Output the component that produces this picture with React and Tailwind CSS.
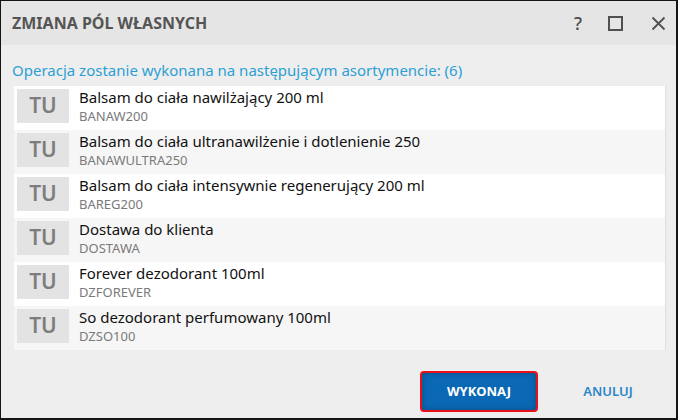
import React from 'react';

const items = [
    { name: 'Balsam do ciała nawilżający 200 ml', code: 'BANAW200' },
    { name: 'Balsam do ciała ultranawilżenie i dotlenienie 250', code: 'BANAWULTRA250' },
    { name: 'Balsam do ciała intensywnie regenerujący 200 ml', code: 'BAREG200' },
    { name: 'Dostawa do klienta', code: 'DOSTAWA' },
    { name: 'Forever dezodorant 100ml', code: 'DZFOREVER' },
    { name: 'So dezodorant perfumowany 100ml', code: 'DZSO100' },
];

const App = () => {
    return (
        <div className="w-[678px] h-[420px] bg-[#eeeeee] border-l border-t border-r-2 border-b-2 border-[#141414] flex flex-col font-['Noto_Sans',sans-serif] overflow-hidden">
            {/* Title bar */}
            <div className="h-[44px] shrink-0 bg-[#e5e5e5] flex items-center pl-[11px] pr-[10px]">
                <h1 className="text-[16px] font-bold text-[#555555]">ZMIANA PÓL WŁASNYCH</h1>
                <div className="ml-auto flex items-center">
                    <span className="w-[14px] text-center text-[18px] font-medium leading-none text-[#4a4a4a]">?</span>
                    <div className="ml-[23px] w-[15px] h-[15px] border-2 border-[#505050]" />
                    <svg className="ml-[28px]" width="15" height="15" viewBox="0 0 15 15">
                        <path d="M1.5 1.5 L13.5 13.5 M13.5 1.5 L1.5 13.5" stroke="#505050" strokeWidth="1.8" fill="none" />
                    </svg>
                </div>
            </div>

            {/* Body */}
            <p className="pl-[11px] pt-[15px] pb-[6px] text-[15px] leading-[20px] text-[#2d9fd5]">
                Operacja zostanie wykonana na następującym asortymencie: (6)
            </p>

            <div className="ml-[13px] w-[651px] shadow-[1px_0_1px_rgba(0,0,0,0.06)]">
                {items.map((item, idx) => (
                    <div
                        key={item.code}
                        className={`h-[44px] flex items-start pl-[3px] pt-[3px] ${idx % 2 === 0 ? 'bg-white' : 'bg-[#f6f6f6]'}`}
                    >
                        <div className="w-[52px] h-[34px] bg-[#e3e3e3] flex items-center justify-center text-[21px] font-semibold text-[#7d7d7d] leading-none pb-[2px]">
                            TU
                        </div>
                        <div className="ml-[10px] -mt-[1px]">
                            <p className="text-[15px] leading-[18px] text-[#111111]">{item.name}</p>
                            <p className="mt-[1px] text-[13px] leading-[18px] text-[#7a7a7a]">{item.code}</p>
                        </div>
                    </div>
                ))}
            </div>

            {/* Footer */}
            <div className="mt-auto mb-[6px] flex items-center justify-end pr-[18px] gap-[20px]">
                <button className="w-[118px] h-[41px] rounded-[4px] border-2 border-[#e8111a] bg-[#0a68b4] shadow-[inset_0_0_6px_rgba(0,0,0,0.25)] text-white text-[13px] font-bold">
                    WYKONAJ
                </button>
                <button className="w-[100px] h-[41px] text-[13px] font-semibold text-[#2a86c9]">
                    ANULUJ
                </button>
            </div>
        </div>
    );
};

export default App;
